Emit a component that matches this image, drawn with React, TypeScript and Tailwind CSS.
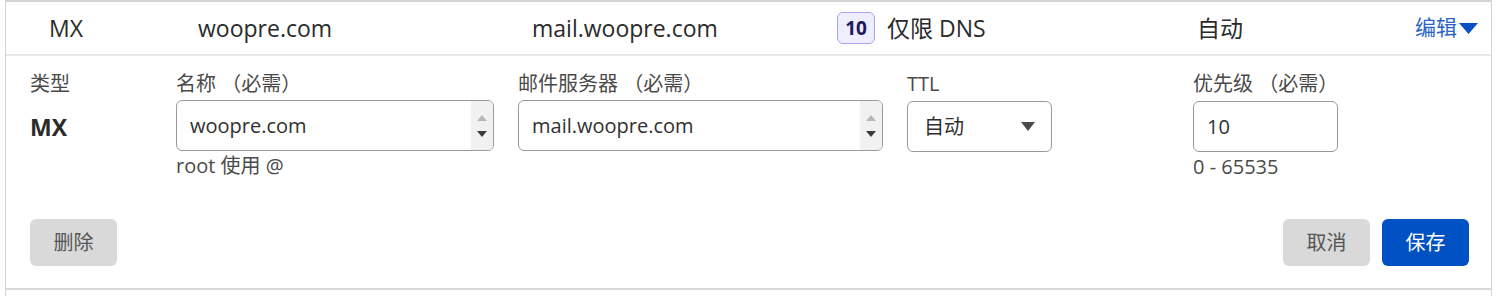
const font = {
  fontFamily: '"Open Sans", "Noto Sans CJK SC", sans-serif',
};

interface SpinInputProps {
  value: string;
  width: string;
}

// Text field with the little up/down arrows on the right
function SpinInput({ value, width }: SpinInputProps) {
  return (
    <div
      className={`flex h-[51px] ${width} items-stretch rounded-[6px] border border-[#9a9a9a] bg-white overflow-hidden`}
    >
      <div className="flex flex-1 items-center pl-[13px] text-[20px] text-[#303030]">
        {value}
      </div>
      <div className="flex w-[22px] flex-col items-center justify-center gap-[10px] bg-[#f1f1f1]">
        <svg width="10" height="6" viewBox="0 0 10 6">
          <path d="M0 6 L5 0 L10 6 Z" fill="#b8b8b8" />
        </svg>
        <svg width="10" height="6" viewBox="0 0 10 6">
          <path d="M0 0 L10 0 L5 6 Z" fill="#3a3a3a" />
        </svg>
      </div>
    </div>
  );
}

function Label({ children }: { children: React.ReactNode }) {
  return (
    <div className="h-[26px] text-[20px] leading-[26px] text-[#4a4a4a]">
      {children}
    </div>
  );
}

export default function App() {
  return (
    <div className="h-[296px] w-[1500px] bg-white" style={font}>
      <div className="ml-[5px] w-[1487px] border-x border-t-2 border-[#d4d4d4]">
        {/* Summary row */}
        <div className="flex h-[54px] items-center border-b-2 border-[#e8e8e8] pl-[43px] pr-[13px] text-[23px] text-[#2b2b2b]">
          <div className="w-[149px]">MX</div>
          <div className="w-[334px]">woopre.com</div>
          <div className="w-[305px]">mail.woopre.com</div>
          <div className="flex w-[360px] items-center gap-[12px]">
            <span className="flex h-[32px] w-[38px] items-center justify-center rounded-[6px] border border-[#a9a6f0] bg-[#eeeefd] text-[19px] font-bold text-[#1c1a5e]">
              10
            </span>
            <span>仅限 DNS</span>
          </div>
          <div className="flex-1">自动</div>
          <button className="flex items-center gap-[2px] text-[21px] text-[#2a63c8]">
            编辑
            <svg width="19" height="11" viewBox="0 0 19 11">
              <path d="M0 0 L19 0 L9.5 11 Z" fill="#0a4fc4" />
            </svg>
          </button>
        </div>

        {/* Edit form */}
        <div className="flex flex-col border-b-2 border-[#d9d9d9] pl-[24px] pr-[22px] pt-[15px] pb-[22px]">
          <div className="flex">
            <div className="w-[146px]">
              <Label>类型</Label>
              <div className="mt-[5px] flex h-[51px] items-center text-[23px] font-bold text-[#2b2b2b]">
                MX
              </div>
            </div>
            <div className="w-[342px]">
              <Label>名称 （必需）</Label>
              <div className="mt-[3px]">
                <SpinInput value="woopre.com" width="w-[318px]" />
              </div>
              <div className="mt-[0px] text-[20px] text-[#4a4a4a]">root 使用 @</div>
            </div>
            <div className="w-[389px]">
              <Label>邮件服务器 （必需）</Label>
              <div className="mt-[3px]">
                <SpinInput value="mail.woopre.com" width="w-[365px]" />
              </div>
            </div>
            <div className="w-[286px]">
              <Label>TTL</Label>
              <div className="mt-[4px] flex h-[51px] w-[145px] items-center justify-between rounded-[6px] border border-[#9a9a9a] pl-[16px] pr-[16px] text-[20px] text-[#303030]">
                <span>自动</span>
                <svg width="14" height="9" viewBox="0 0 14 9">
                  <path d="M0 0 L14 0 L7 9 Z" fill="#4a4a4a" />
                </svg>
              </div>
            </div>
            <div className="w-[160px]">
              <Label>优先级 （必需）</Label>
              <div className="mt-[4px] flex h-[51px] w-[145px] items-center rounded-[6px] border border-[#9a9a9a] pl-[13px] text-[20px] text-[#303030]">
                10
              </div>
              <div className="mt-[0px] text-[20px] text-[#4a4a4a]">0 - 65535</div>
            </div>
          </div>

          <div className="mt-[37px] flex items-center justify-between">
            <button className="h-[47px] w-[87px] rounded-[6px] bg-[#d9d9d9] text-[20px] text-[#555555]">
              删除
            </button>
            <div className="flex gap-[12px]">
              <button className="h-[47px] w-[87px] rounded-[6px] bg-[#d9d9d9] text-[20px] text-[#555555]">
                取消
              </button>
              <button className="h-[47px] w-[87px] rounded-[6px] bg-[#0051c3] text-[20px] text-white">
                保存
              </button>
            </div>
          </div>
        </div>
        <div className="h-[6px]" />
      </div>
    </div>
  );
}
